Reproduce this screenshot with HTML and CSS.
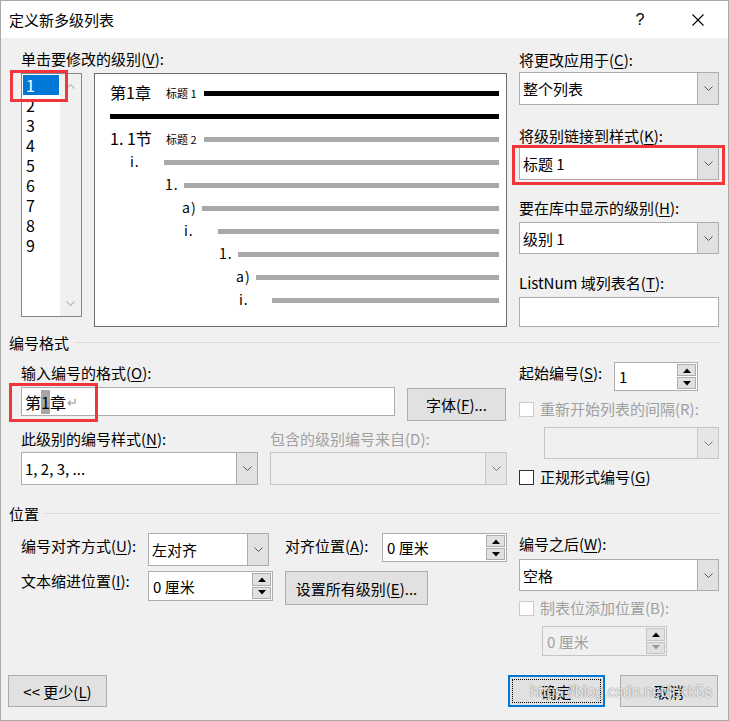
FILE: index.html
```html
<!DOCTYPE html>
<html lang="zh-CN">
<head>
<meta charset="utf-8">
<title>定义新多级列表</title>
<link rel="stylesheet" href="styles.css">
</head>
<body>
<div class="dialog">
  <div class="titlebar">
    <span class="title">定义新多级列表</span>
    <span class="help">?</span>
    <span class="close"><svg width="12" height="12" viewBox="0 0 12 12"><path d="M0.5 0.5L11.5 11.5M11.5 0.5L0.5 11.5" stroke="#000" stroke-width="1.1" fill="none"/></svg></span>
  </div>

  <div class="top">
    <div class="top-left">
      <div class="lbl">单击要修改的级别(<u>V</u>):</div>
      <div class="level-row">
        <div class="level-list">
          <div class="items">
            <div class="item sel">1</div>
            <div class="item">2</div>
            <div class="item">3</div>
            <div class="item">4</div>
            <div class="item">5</div>
            <div class="item">6</div>
            <div class="item">7</div>
            <div class="item">8</div>
            <div class="item">9</div>
          </div>
          <div class="vscroll">
            <svg width="9" height="5" viewBox="0 0 9 5"><polyline points="0.5,4.5 4.5,0.5 8.5,4.5" fill="none" stroke="#bcbcbc" stroke-width="1.2"/></svg>
            <svg width="9" height="5" viewBox="0 0 9 5"><polyline points="0.5,0.5 4.5,4.5 8.5,0.5" fill="none" stroke="#bcbcbc" stroke-width="1.2"/></svg>
          </div>
          <div class="redbox rb-list"></div>
        </div>
        <div class="preview">
          <div class="prow r1"><span class="pnum"><span class="big">第1章</span><span class="tag">标题 1</span></span><span class="pbar black"></span></div>
          <div class="prow r2"><span class="pnum"></span><span class="pbar black"></span></div>
          <div class="prow r1"><span class="pnum"><span class="big">1. 1节</span><span class="tag">标题 2</span></span><span class="pbar"></span></div>
          <div class="prow r4"><span class="pnum">i.</span><span class="pbar"></span></div>
          <div class="prow r5"><span class="pnum">1.</span><span class="pbar"></span></div>
          <div class="prow r6"><span class="pnum">a)</span><span class="pbar"></span></div>
          <div class="prow r7"><span class="pnum">i.</span><span class="pbar"></span></div>
          <div class="prow r8"><span class="pnum">1.</span><span class="pbar"></span></div>
          <div class="prow r9"><span class="pnum">a)</span><span class="pbar"></span></div>
          <div class="prow r10"><span class="pnum">i.</span><span class="pbar"></span></div>
        </div>
      </div>
    </div>
    <div class="top-right">
      <div class="lbl">将更改应用于(<u>C</u>):</div>
      <div class="combo c-apply"><span class="cval">整个列表</span><span class="cbtn"><svg width="9" height="5" viewBox="0 0 9 5"><polyline points="0.5,0.5 4.5,4.5 8.5,0.5" fill="none" stroke="#555" stroke-width="1"/></svg></span></div>
      <div class="lbl g2">将级别链接到样式(<u>K</u>):</div>
      <div class="combo c-link"><span class="cval">标题 1</span><span class="cbtn"><svg width="9" height="5" viewBox="0 0 9 5"><polyline points="0.5,0.5 4.5,4.5 8.5,0.5" fill="none" stroke="#555" stroke-width="1"/></svg></span><div class="redbox rb-link"></div></div>
      <div class="lbl g3">要在库中显示的级别(<u>H</u>):</div>
      <div class="combo c-lib"><span class="cval">级别 1</span><span class="cbtn"><svg width="9" height="5" viewBox="0 0 9 5"><polyline points="0.5,0.5 4.5,4.5 8.5,0.5" fill="none" stroke="#555" stroke-width="1"/></svg></span></div>
      <div class="lbl g4">ListNum 域列表名(<u>T</u>):</div>
      <div class="textbox t-listnum"></div>
    </div>
  </div>

  <div class="sec-head h-num"><span>编号格式</span><span class="rule"></span></div>
  <div class="sec-body">
    <div class="sec-left">
      <div class="lbl m10">输入编号的格式(<u>O</u>):</div>
      <div class="fmt-row">
        <div class="textbox t-format"><span>第</span><span class="hl">1</span><span>章</span><span class="ret">↵</span><div class="redbox rb-fmt"></div></div>
        <div class="btn b-font">字体(<u>F</u>)...</div>
      </div>
      <div class="pair-row lbl-pair">
        <div class="lbl col">此级别的编号样式(<u>N</u>):</div>
        <div class="lbl col dis">包含的级别编号来自(D):</div>
      </div>
      <div class="pair-row combo-pair">
        <div class="combo c-style"><span class="cval">1, 2, 3, ...</span><span class="cbtn"><svg width="9" height="5" viewBox="0 0 9 5"><polyline points="0.5,0.5 4.5,4.5 8.5,0.5" fill="none" stroke="#555" stroke-width="1"/></svg></span></div>
        <div class="combo c-style disabled"><span class="cval"></span><span class="cbtn"><svg width="9" height="5" viewBox="0 0 9 5"><polyline points="0.5,0.5 4.5,4.5 8.5,0.5" fill="none" stroke="#777" stroke-width="1"/></svg></span></div>
      </div>
    </div>
    <div class="sec-right">
      <div class="start-row">
        <div class="lbl start-lbl">起始编号(<u>S</u>):</div>
        <div class="spin s-start"><span class="sval">1</span><span class="sbtns"><span class="sbtn"><svg width="8" height="5" viewBox="0 0 8 5"><polygon points="0,5 4,0.5 8,5" fill="#000"/></svg></span><span class="sbtn"><svg width="8" height="5" viewBox="0 0 8 5"><polygon points="0,0 4,4.5 8,0" fill="#000"/></svg></span></span></div>
      </div>
      <div class="chk-row m8 dis"><span class="chk disabled"></span><span>重新开始列表的间隔(R):</span></div>
      <div class="combo c-restart disabled"><span class="cval"></span><span class="cbtn"><svg width="9" height="5" viewBox="0 0 9 5"><polyline points="0.5,0.5 4.5,4.5 8.5,0.5" fill="none" stroke="#777" stroke-width="1"/></svg></span></div>
      <div class="chk-row m8"><span class="chk"></span><span>正规形式编号(<u>G</u>)</span></div>
    </div>
  </div>

  <div class="sec-head h-pos"><span>位置</span><span class="rule"></span></div>
  <div class="sec-body">
    <div class="sec-left">
      <div class="pos-row p1">
        <div class="lbl plbl">编号对齐方式(<u>U</u>):</div>
        <div class="combo c-align"><span class="cval">左对齐</span><span class="cbtn"><svg width="9" height="5" viewBox="0 0 9 5"><polyline points="0.5,0.5 4.5,4.5 8.5,0.5" fill="none" stroke="#555" stroke-width="1"/></svg></span></div>
        <div class="lbl plbl2">对齐位置(<u>A</u>):</div>
        <div class="spin s-pos"><span class="sval">0 厘米</span><span class="sbtns"><span class="sbtn"><svg width="8" height="5" viewBox="0 0 8 5"><polygon points="0,5 4,0.5 8,5" fill="#000"/></svg></span><span class="sbtn"><svg width="8" height="5" viewBox="0 0 8 5"><polygon points="0,0 4,4.5 8,0" fill="#000"/></svg></span></span></div>
      </div>
      <div class="pos-row p2">
        <div class="lbl plbl p2lbl">文本缩进位置(<u>I</u>):</div>
        <div class="spin s-indent"><span class="sval">0 厘米</span><span class="sbtns"><span class="sbtn"><svg width="8" height="5" viewBox="0 0 8 5"><polygon points="0,5 4,0.5 8,5" fill="#000"/></svg></span><span class="sbtn"><svg width="8" height="5" viewBox="0 0 8 5"><polygon points="0,0 4,4.5 8,0" fill="#000"/></svg></span></span></div>
        <div class="btn b-all">设置所有级别(<u>E</u>)...</div>
      </div>
    </div>
    <div class="sec-right">
      <div class="lbl m10">编号之后(<u>W</u>):</div>
      <div class="combo c-after"><span class="cval">空格</span><span class="cbtn"><svg width="9" height="5" viewBox="0 0 9 5"><polyline points="0.5,0.5 4.5,4.5 8.5,0.5" fill="none" stroke="#555" stroke-width="1"/></svg></span></div>
      <div class="chk-row m7 dis"><span class="chk disabled"></span><span>制表位添加位置(B):</span></div>
      <div class="spin s-tab disabled"><span class="sval">0 厘米</span><span class="sbtns"><span class="sbtn"><svg width="8" height="5" viewBox="0 0 8 5"><polygon points="0,5 4,0.5 8,5" fill="#000"/></svg></span><span class="sbtn"><svg width="8" height="5" viewBox="0 0 8 5"><polygon points="0,0 4,4.5 8,0" fill="#999"/></svg></span></span></div>
    </div>
  </div>

  <div class="footer">
    <div class="btn b-less">&lt;&lt; 更少(<u>L</u>)</div>
    <div class="spacer"></div>
    <div class="btn b-ok"><span class="focus">确定</span></div>
    <div class="btn b-cancel">取消</div>
  </div>

  <div class="watermark">https://blog.csdn.net/jack5s</div>
</div>
</body>
</html>
```
FILE: styles.css
```css
* { box-sizing: border-box; }
html, body { margin: 0; padding: 0; background: #f0f0f0; }
body { width: 729px; height: 721px; overflow: hidden; }

.dialog {
  width: 729px;
  height: 721px;
  border: 1px solid #a9a9a9;
  background: #f0f0f0;
  position: relative;
  font-family: "Noto Sans CJK SC", "Noto Sans", sans-serif;
  font-size: 15px;
  color: #000;
}
u { text-decoration: underline; text-underline-offset: 2px; text-decoration-thickness: 1px; }

/* title bar */
.titlebar {
  height: 37px;
  background: #fff;
  display: flex;
  align-items: center;
  padding-left: 8px;
  padding-right: 7px;
}
.title { flex: 1; line-height: 20px; }
.help { width: 20px; text-align: center; margin-right: 25px; font-family: "Liberation Sans", sans-serif; font-size: 16px; }
.close { width: 46px; display: flex; justify-content: center; align-items: center; }

.lbl { height: 20px; line-height: 20px; white-space: nowrap; }
.dis { color: #a0a0a0; }

/* top section */
.top { display: flex; align-items: flex-start; padding: 11px 0 0 20px; }
.top-left { width: 486px; }
.top-right { width: 200px; margin-left: 12px; padding-top: 1px; }

.level-row { display: flex; align-items: flex-start; margin-top: 4px; }
.level-list {
  width: 61px;
  height: 244px;
  border: 1px solid #828790;
  background: #fff;
  display: flex;
  position: relative;
}
.items { width: 38px; padding: 1px; }
.item { height: 20px; line-height: 20px; padding-left: 3px; font-size: 16px; }
.item.sel { background: #0078d7; color: #fff; }
.vscroll {
  width: 21px;
  background: #f0f0f0;
  display: flex;
  flex-direction: column;
  justify-content: space-between;
  align-items: center;
  padding: 10px 0 10px;
}

.redbox { position: absolute; border: 3px solid #f0363a; pointer-events: none; }
.rb-list { left: -12px; top: -4px; width: 58px; height: 32px; }
.rb-link { left: -8px; top: -3px; width: 213px; height: 40px; }
.rb-fmt { left: -13px; top: -5px; width: 89px; height: 39px; }

.preview {
  width: 413px;
  height: 254px;
  margin-left: 12px;
  border: 1px solid #6e6e6e;
  background: #fff;
  padding: 8px 7px 0 0;
}
.prow { display: flex; align-items: center; height: 23px; padding-left: var(--t); }
.pnum {
  width: calc(var(--b) - var(--t));
  flex: none;
  display: flex;
  align-items: center;
  font-size: 14px;
  line-height: 16px;
  margin-bottom: 4px;
  letter-spacing: 1px;
}
.pbar { flex: 1; height: 5px; background: #a9a9a9; }
.pbar.black { background: #000; }
.big { width: 56px; font-size: 16px; letter-spacing: 0; }
.tag { font-size: 11px; letter-spacing: 0; margin-top: 3px; }
.r1 { --t: 15px; --b: 109px; }
.r2 { --t: 15px; --b: 15px; }
.r4 { --t: 35px; --b: 69px; }
.r5 { --t: 70px; --b: 89px; }
.r6 { --t: 87px; --b: 107px; }
.r7 { --t: 89px; --b: 123px; }
.r8 { --t: 124px; --b: 143px; }
.r9 { --t: 141px; --b: 161px; }
.r10 { --t: 144px; --b: 177px; }

/* combos */
.combo {
  display: flex;
  height: 33px;
  border: 1px solid #adadad;
  background: #fff;
  position: relative;
}
.cval { flex: 1; padding-left: 3px; display: flex; align-items: center; white-space: nowrap; }
.cbtn {
  width: 21px;
  background: #e1e1e1;
  border-left: 1px solid #adadad;
  display: flex;
  align-items: center;
  justify-content: center;
}
.combo.disabled { background: #f0f0f0; border-color: #c5c5c5; }
.combo.disabled .cbtn { background: #e6e6e6; border-left-color: #c5c5c5; }

.c-apply { margin-top: 2px; }
.g2 { margin-top: 21px; }
.c-link { margin-top: 1px; }
.g3 { margin-top: 18px; }
.c-lib { margin-top: 4px; height: 32px; }
.g4 { margin-top: 19px; }

.textbox { border: 1px solid #adadad; background: #fff; position: relative; }
.t-listnum { margin-top: 4px; height: 30px; }

/* section headers */
.sec-head { display: flex; align-items: center; height: 20px; padding-left: 8px; line-height: 20px; }
.sec-head .rule { flex: 1; height: 1px; background: #d9d9d9; margin: 0 8px 1px 6px; }
.h-num { margin-top: 6px; }
.h-pos { margin-top: 17px; }

.sec-body { display: flex; align-items: flex-start; padding-left: 20px; }
.sec-left { width: 486px; }
.sec-right { width: 200px; margin-left: 12px; }

.m10 { margin-top: 10px; }
.m8 { margin-top: 8px; }
.m7 { margin-top: 7px; }

.fmt-row { display: flex; align-items: flex-start; margin-top: 4px; }
.t-format {
  width: 374px;
  height: 29px;
  display: flex;
  align-items: center;
  padding-left: 3px;
  font-size: 16px;
}
.hl { background: #a6a6a6; }
.ret { color: #9a9a9a; font-size: 13px; margin-left: 1px; }

.btn {
  background: #e1e1e1;
  border: 1px solid #adadad;
  display: flex;
  align-items: center;
  justify-content: center;
  white-space: nowrap;
}
.b-font { width: 99px; height: 33px; margin-left: 12px; margin-top: 1px; }

.pair-row { display: flex; gap: 12px; }
.pair-row > * { width: 237px; }
.lbl-pair { margin-top: 8px; }
.combo-pair { margin-top: 3px; }

.start-row { display: flex; align-items: flex-start; margin-top: 9px; }
.start-lbl { width: 95px; margin-top: 1px; }

.spin { display: flex; border: 1px solid #adadad; background: #fff; }
.sval { flex: 1; padding-left: 4px; display: flex; align-items: center; white-space: nowrap; }
.sbtns { width: 20px; display: flex; flex-direction: column; padding: 1px 1px 1px 0; gap: 1px; }
.sbtn {
  flex: 1;
  background: #e1e1e1;
  border: 1px solid #adadad;
  display: flex;
  align-items: center;
  justify-content: center;
}
.s-start { width: 84px; height: 29px; }
.spin.disabled { background: #f0f0f0; border-color: #c5c5c5; }
.spin.disabled .sval { color: #a0a0a0; }
.spin.disabled .sbtn { border-color: #c5c5c5; }

.chk-row { display: flex; align-items: center; height: 20px; line-height: 20px; white-space: nowrap; }
.chk { width: 15px; height: 15px; border: 1px solid #333; background: #fff; margin-right: 6px; flex: none; }
.chk.disabled { border-color: #cccccc; }

.c-restart { width: 175px; height: 32px; margin-left: 25px; margin-top: 8px; }

/* position section */
.pos-row { display: flex; align-items: flex-start; }
.p1 { margin-top: 9px; }
.p2 { margin-top: 5px; }
.plbl { width: 127px; margin-top: 3px; }
.p2lbl { margin-top: 0; }
.c-align { width: 121px; height: 33px; }
.plbl2 { width: 97px; margin-left: 16px; margin-top: 3px; }
.s-pos { width: 125px; height: 29px; }
.s-indent { width: 125px; height: 30px; }
.b-all { width: 143px; height: 34px; margin-left: 12px; }

.c-after { margin-top: 5px; height: 32px; }
.s-tab { width: 125px; height: 30px; margin-left: 23px; margin-top: 8px; }

/* footer */
.footer { display: flex; align-items: flex-start; margin-top: 19px; padding: 0 10px 0 7px; }
.spacer { flex: 1; }
.b-less { width: 99px; height: 32px; }
.b-ok { width: 97px; height: 32px; border: 2px solid #0078d7; padding: 2px; }
.b-ok .focus { width: 100%; height: 100%; border: 1px dotted #000; display: flex; align-items: center; justify-content: center; }
.b-cancel { width: 98px; height: 32px; margin-left: 15px; }

.watermark {
  position: absolute;
  left: 529px;
  top: 682px;
  font-family: "Liberation Sans", sans-serif;
  font-size: 16px;
  letter-spacing: -0.4px;
  color: rgba(255, 255, 255, 0.85);
  text-shadow: 0 0 1px rgba(0, 0, 0, 0.45), 0 0 2px rgba(0, 0, 0, 0.2);
  white-space: nowrap;
  pointer-events: none;
}
```
